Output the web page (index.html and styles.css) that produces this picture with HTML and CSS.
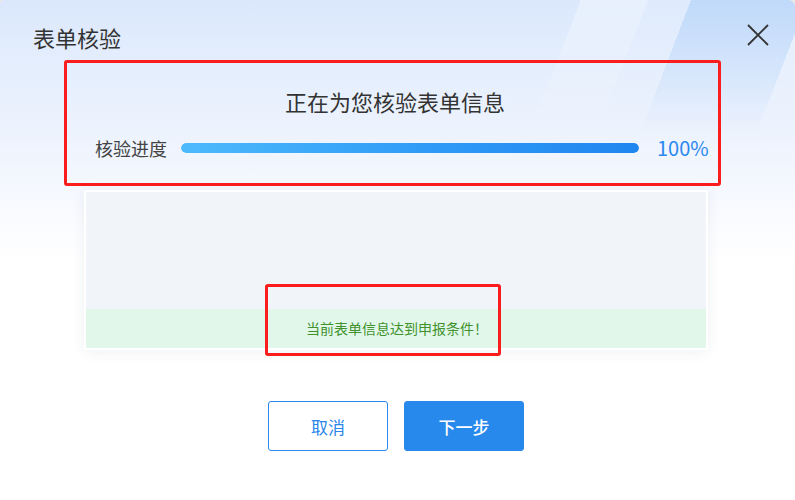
FILE: index.html
```html
<!DOCTYPE html>
<html lang="zh-CN">
<head>
<meta charset="utf-8">
<title>表单核验</title>
<link rel="stylesheet" href="styles.css">
</head>
<body>
<div class="dialog">
  <div class="deco"></div>
  <header class="header">
    <h1 class="title">表单核验</h1>
    <button class="close" aria-label="关闭">
      <svg width="22" height="22" viewBox="0 0 22 22"><path d="M1 1 L21 21 M21 1 L1 21" stroke="#333" stroke-width="1.8" fill="none"/></svg>
    </button>
  </header>
  <section class="check-box">
    <h2 class="check-title">正在为您核验表单信息</h2>
    <div class="progress-row">
      <span class="progress-label">核验进度</span>
      <div class="bar"><div class="bar-fill" style="width:100%"></div></div>
      <span class="percent">100%</span>
    </div>
  </section>
  <section class="panel">
    <div class="panel-body"></div>
    <div class="result">当前表单信息达到申报条件！</div>
    <div class="mark"></div>
  </section>
  <footer class="actions">
    <button class="btn btn-cancel">取消</button>
    <button class="btn btn-next">下一步</button>
  </footer>
</div>
</body>
</html>
```
FILE: styles.css
```css
* { box-sizing: border-box; }
html, body {
  margin: 0;
  padding: 0;
  background: #e9e9ea;
}
body {
  font-family: "Noto Sans CJK SC", "Noto Sans", sans-serif;
  width: 795px;
  height: 500px;
  overflow: hidden;
}
.dialog {
  position: relative;
  width: 795px;
  height: 500px;
  border-radius: 5px 7px 0 0;
  overflow: hidden;
  background: linear-gradient(180deg, #dbe8fc 0px, #e6effd 80px, #f2f6fe 170px, #fbfcff 225px, #ffffff 265px);
}
.deco {
  position: absolute;
  top: 0;
  right: 0;
  width: 300px;
  height: 130px;
  pointer-events: none;
  -webkit-mask-image: linear-gradient(180deg, #000 0%, rgba(0,0,0,0.6) 40%, rgba(0,0,0,0) 100%);
  mask-image: linear-gradient(180deg, #000 0%, rgba(0,0,0,0.6) 40%, rgba(0,0,0,0) 100%);
  background:
    linear-gradient(111deg,
      rgba(255,255,255,0) 0px,
      rgba(255,255,255,0) 80px,
      rgba(255,255,255,0.35) 80px,
      rgba(255,255,255,0.35) 143px,
      rgba(255,255,255,0.12) 143px,
      rgba(255,255,255,0.12) 183px,
      rgba(165,203,248,0.5) 183px,
      rgba(165,203,248,0.5) 292px,
      rgba(255,255,255,0.3) 292px);
}
.header {
  position: relative;
  display: flex;
  justify-content: space-between;
  align-items: flex-start;
  padding: 22px 26px 0 33px;
  height: 60px;
}
.title {
  margin: 0;
  font-size: 22px;
  line-height: 30px;
  font-weight: 400;
  color: #333;
}
.close {
  margin-top: 2px;
  padding: 0;
  border: 0;
  background: none;
  width: 22px;
  height: 22px;
  display: block;
}
.close svg { display: block; }
.check-box {
  position: relative;
  margin-left: 64px;
  width: 657px;
  height: 126px;
  border: 3px solid #fb1d1d;
  border-radius: 3px;
  padding: 23px 9px 0 28px;
}
.check-title {
  margin: 0;
  text-align: center;
  font-size: 22px;
  line-height: 30px;
  font-weight: 400;
  color: #333;
  padding-right: 14px;
}
.progress-row {
  display: flex;
  align-items: center;
  margin-top: 20px;
  height: 24px;
}
.progress-label {
  font-size: 18px;
  color: #444;
  line-height: 24px;
  width: 86px;
}
.bar {
  width: 458px;
  height: 10px;
  border-radius: 5px;
  background: #e6ecf5;
  overflow: hidden;
}
.bar-fill {
  height: 100%;
  border-radius: 5px;
  background: linear-gradient(90deg, #4cbafc 0%, #2f9af7 55%, #1f86ef 100%);
}
.percent {
  margin-left: 18px;
  font-size: 20px;
  line-height: 24px;
  color: #2b88ee;
}
.panel {
  position: relative;
  margin: 4px 0 0 84px;
  width: 624px;
  height: 160px;
  border: 2px solid #fff;
  border-radius: 2px;
  background: #f1f4f9;
  box-shadow: 0 2px 14px rgba(40, 60, 100, 0.07);
  display: flex;
  flex-direction: column;
}
.panel-body { flex: 1; }
.result {
  height: 39px;
  background: #e0f7ea;
  color: #41922c;
  font-size: 14px;
  line-height: 39px;
  text-align: center;
  padding-left: 2px;
}
.mark {
  position: absolute;
  left: 179px;
  top: 92px;
  width: 236px;
  height: 72px;
  border: 3px solid #fb1d1d;
  border-radius: 3px;
}
.actions {
  display: flex;
  justify-content: center;
  gap: 16px;
  margin-top: 51px;
  padding-right: 3px;
}
.btn {
  width: 120px;
  height: 50px;
  border-radius: 3px;
  font-family: inherit;
  font-size: 17px;
  cursor: pointer;
}
.btn-cancel {
  background: #fff;
  border: 1px solid #2c89ec;
  color: #2a86e9;
}
.btn-next {
  background: #2889ec;
  border: 1px solid #2889ec;
  color: #fff;
  font-weight: 500;
}
```
